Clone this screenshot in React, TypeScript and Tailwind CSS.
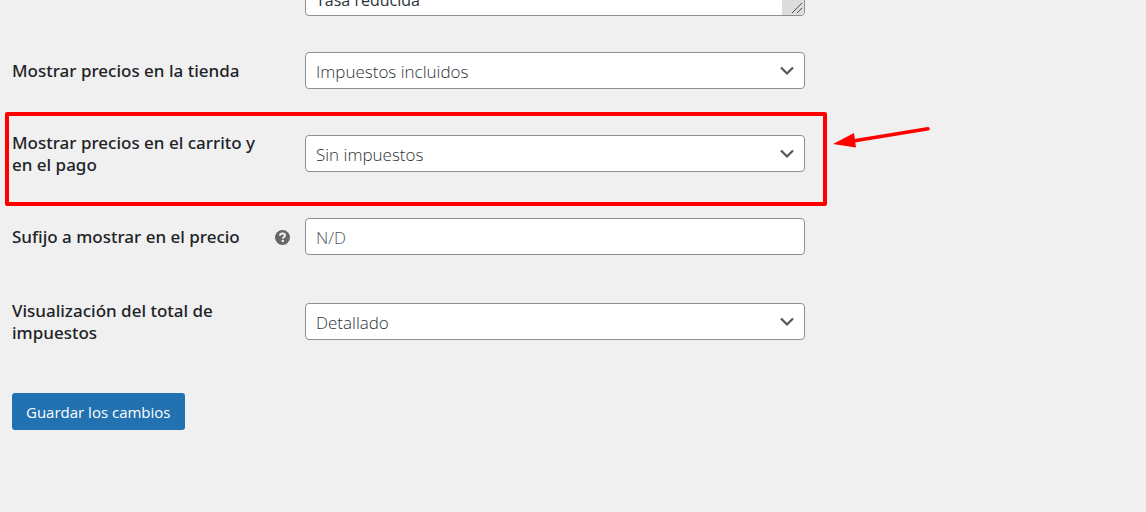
import React from "react";

const inputStyle =
  "block h-[37px] w-full rounded border border-[#8c8f94] bg-white px-2.5 pt-0.5 text-[17px] font-light text-[#2c3338]";

function Row({ id, label, help, marked, className = "", children }: {
  id: string;
  label: string;
  help?: boolean;
  marked?: boolean;
  className?: string;
  children: React.ReactNode;
}) {
  return (
    <div className={`relative flex min-h-[45px] items-center ${className}`}>
      <div className="flex w-[293px] shrink-0 items-center justify-between pr-[15px]">
        <label htmlFor={id} className="max-w-[250px] font-['Noto_Sans',sans-serif] text-[17px] leading-[22px] font-medium text-[#1d2327]">
          {label}
        </label>
        {help && <HelpTip />}
      </div>
      <div className="relative min-w-0 flex-1">{children}</div>
      {marked && <Highlight />}
    </div>
  );
}

function HelpTip() {
  return (
    <svg width="16" height="16" viewBox="0 0 16 16" role="img" aria-label="Ayuda">
      <circle cx="8.5" cy="8.5" r="7.5" fill="#666" />
      <path d="M6 6.8C6 5.3 7 4.6 8.5 4.6C10 4.6 11 5.3 11 6.5C11 8.1 8.8 8 8.8 9.8" fill="none" stroke="#f0f0f1" strokeWidth="2" />
      <rect x="7.7" y="10.9" width="2.2" height="2.2" fill="#f0f0f1" />
    </svg>
  );
}

function Highlight() {
  return (
    <>
      <div className="pointer-events-none absolute -top-[19px] -right-[22px] -bottom-[30px] -left-[7px] rounded-xs border-4 border-[#ff0000]" />
      <svg className="pointer-events-none absolute -top-2 left-full ml-7" width="100" height="30" viewBox="0 0 100 30" aria-hidden="true">
        <path d="M20 18L95 5.8" stroke="#ff0000" strokeWidth="3.6" strokeLinecap="round" />
        <path d="M0 21L21 10L23 24.5Z" fill="#ff0000" />
      </svg>
    </>
  );
}

function Select({ id, options }: { id: string; options: string[] }) {
  return (
    <>
      <select id={id} className={`${inputStyle} appearance-none pr-8`}>
        {options.map((o) => (
          <option key={o}>{o}</option>
        ))}
      </select>
      <svg className="pointer-events-none absolute top-3 right-2.5" width="16" height="13" viewBox="0 0 16 13" aria-hidden="true">
        <path d="M2 3.5L8 9.5L14 3.5" fill="none" stroke="#50575e" strokeWidth="2.2" />
      </svg>
    </>
  );
}

export default function App() {
  return (
    <main className="min-h-screen bg-[#f0f0f0] px-3 font-['Open_Sans','Noto_Sans',sans-serif]">
      <form className="max-w-[793px]" onSubmit={(e) => e.preventDefault()}>
        <div className="relative ml-[293px] flex h-4 items-end overflow-hidden">
          <textarea
            aria-label="Clases de impuestos adicionales"
            rows={1}
            className="block h-10 w-full shrink-0 resize-none overflow-hidden rounded border border-[#8c8f94] bg-white px-2.5 pt-[11px] text-base leading-6 font-normal text-[#2c3338]"
            defaultValue="Tasa reducida"
          />
          <svg className="absolute right-px bottom-px" width="22" height="15" viewBox="0 0 22 15" aria-hidden="true">
            <path d="M0 0H22V12L19 15H0Z" fill="#dcdcdc" />
            <path d="M10 13L20 3M15 13L20 8" stroke="#505050" />
          </svg>
        </div>

        <Row id="shop" label="Mostrar precios en la tienda" className="mt-8">
          <Select id="shop" options={["Impuestos incluidos", "Sin impuestos"]} />
        </Row>
        <Row id="cart" label="Mostrar precios en el carrito y en el pago" marked className="mt-[38px]">
          <Select id="cart" options={["Sin impuestos", "Impuestos incluidos"]} />
        </Row>
        <Row id="suffix" label="Sufijo a mostrar en el precio" help className="mt-[38px]">
          <input id="suffix" type="text" placeholder="N/D" className={`${inputStyle} placeholder:text-[#50575e]`} />
        </Row>
        <Row id="totals" label="Visualización del total de impuestos" className="mt-10">
          <Select id="totals" options={["Detallado", "Como un total único"]} />
        </Row>

        <button type="submit" className="mt-[49px] h-[37px] rounded-[3px] bg-[#2271b1] px-3.5 pt-px text-[15px] text-white">
          Guardar los cambios
        </button>
      </form>
    </main>
  );
}
